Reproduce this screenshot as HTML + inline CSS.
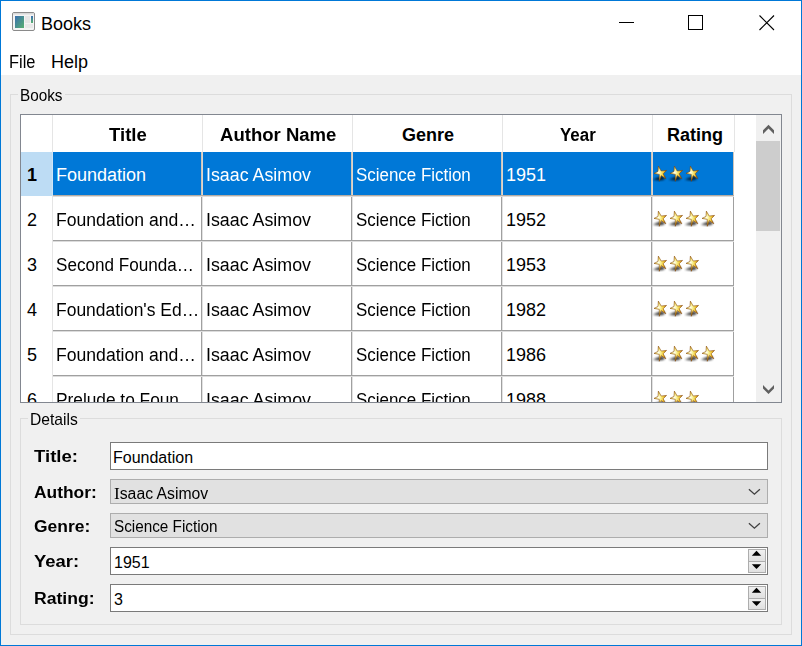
<!DOCTYPE html>
<html><head><meta charset="utf-8"><style>
html,body{margin:0;padding:0;}
body{width:802px;height:646px;overflow:hidden;position:relative;background:#f0f0f0;font-family:"Liberation Sans", sans-serif;}
.t{position:absolute;line-height:1;white-space:nowrap;font-family:"Liberation Sans", sans-serif;}
</style></head><body>
<svg width="0" height="0" style="position:absolute">
<defs>
<radialGradient id="sg" cx="0.36" cy="0.42" r="0.62"><stop offset="0" stop-color="#fffff0"/><stop offset="0.3" stop-color="#faf090"/><stop offset="0.65" stop-color="#f0c838"/><stop offset="1" stop-color="#c07a10"/></radialGradient>
<filter id="sb" x="-50%" y="-50%" width="200%" height="200%"><feGaussianBlur stdDeviation="0.8"/></filter>
<symbol id="star" viewBox="0 0 16 17" overflow="visible">
<path d="M0.8 14.8 L5.5 12.4 L9.5 11.2 L12.8 12.2 L12 14.8 L7.5 15.6 Z" fill="#000" opacity="0.75" filter="url(#sb)"/>
<path d="M6.35 1.1 L9.2 6.0 L14.55 5.4 L11.2 8.8 L13.8 13.8 L9.2 10.6 L7.3 16.3 L7.3 9.4 L2.0 8.4 L6.0 6.4 Z" fill="url(#sg)" stroke="#804000" stroke-width="0.55" stroke-linejoin="miter"/>
</symbol></defs></svg>
<div style="position:absolute;left:1px;top:75px;width:800px;height:570px;background:#f0f0f0;"></div>
<div style="position:absolute;left:1px;top:1px;width:800px;height:74px;background:#fff;"></div>
<svg style="position:absolute;left:12px;top:12px" width="24" height="20" viewBox="0 0 24 20">
<defs><linearGradient id="ig" x1="0" y1="0" x2="1" y2="1"><stop offset="0" stop-color="#3a6fb0"/><stop offset="1" stop-color="#58b070"/></linearGradient>
<linearGradient id="ig2" x1="0" y1="0" x2="0" y2="1"><stop offset="0" stop-color="#3a6fb0"/><stop offset="1" stop-color="#58b070"/></linearGradient></defs>
<rect x="0.5" y="0.5" width="22" height="18" rx="1.5" fill="#f4f4f4" stroke="#8a8a8a"/>
<rect x="1" y="1" width="21" height="1.5" fill="#d8d8d8"/>
<rect x="3" y="4" width="9" height="12" fill="url(#ig)"/>
<rect x="13" y="4" width="5" height="7" fill="#e6e6e6"/>
<rect x="13" y="12" width="8" height="4" fill="#e8e8e8"/>
<rect x="19" y="4" width="2" height="7" fill="url(#ig2)"/>
</svg>
<div class="t" style="left:41px;top:15.00px;font-size:18px;font-weight:400;color:#000;">Books</div>
<div style="position:absolute;left:619px;top:22px;width:15px;height:1px;background:#000;"></div>
<div style="position:absolute;left:688px;top:15px;width:15px;height:15px;box-sizing:border-box;border:1px solid #000;"></div>
<svg style="position:absolute;left:758px;top:14px" width="18" height="18" viewBox="0 0 18 18"><path d="M1.5 1.5 L16 16 M16 1.5 L1.5 16" stroke="#000" stroke-width="1.1" fill="none"/></svg>
<div class="t" style="left:9px;top:53.00px;font-size:18px;font-weight:400;color:#000;transform:scaleX(0.91);transform-origin:0 0;">File</div>
<div class="t" style="left:51px;top:53.00px;font-size:18px;font-weight:400;color:#000;">Help</div>
<div style="position:absolute;left:10px;top:94px;width:782px;height:541px;box-sizing:border-box;border:1px solid #dcdcdc;"></div>
<div style="position:absolute;left:18px;top:85px;width:47px;height:16px;background:#f0f0f0;"></div>
<div class="t" style="left:20px;top:87.00px;font-size:17px;font-weight:400;color:#000;transform:scaleX(0.9);transform-origin:0 0;">Books</div>
<div style="position:absolute;left:20px;top:114px;width:762px;height:289px;box-sizing:border-box;border:1px solid #828790;background:#fff;"></div>
<div style="position:absolute;left:21px;top:115px;width:735px;height:287px;overflow:hidden">
<div style="position:absolute;left:31px;top:0px;width:1px;height:37px;background:#e5e5e5;"></div>
<div style="position:absolute;left:181px;top:0px;width:1px;height:37px;background:#e5e5e5;"></div>
<div style="position:absolute;left:331px;top:0px;width:1px;height:37px;background:#e5e5e5;"></div>
<div style="position:absolute;left:481px;top:0px;width:1px;height:37px;background:#e5e5e5;"></div>
<div style="position:absolute;left:631px;top:0px;width:1px;height:37px;background:#e5e5e5;"></div>
<div style="position:absolute;left:713px;top:0px;width:1px;height:37px;background:#e5e5e5;"></div>
<div style="position:absolute;left:31px;top:37px;width:1px;height:251px;background:#e5e5e5;"></div>
<div style="position:absolute;left:0px;top:37px;width:31px;height:44px;background:#bddcf4;"></div>
<div style="position:absolute;left:31px;top:37px;width:1px;height:44px;background:#cfe4f6;"></div>
<div style="position:absolute;left:32px;top:37px;width:681px;height:44px;background:#0078d7;"></div>
<div style="position:absolute;left:180px;top:37px;width:1px;height:44px;background:#cfc5ba;"></div>
<div style="position:absolute;left:181px;top:37px;width:1px;height:44px;background:#ddd6cf;"></div>
<div style="position:absolute;left:330px;top:37px;width:1px;height:44px;background:#cfc5ba;"></div>
<div style="position:absolute;left:331px;top:37px;width:1px;height:44px;background:#ddd6cf;"></div>
<div style="position:absolute;left:480px;top:37px;width:1px;height:44px;background:#cfc5ba;"></div>
<div style="position:absolute;left:481px;top:37px;width:1px;height:44px;background:#ddd6cf;"></div>
<div style="position:absolute;left:630px;top:37px;width:1px;height:44px;background:#cfc5ba;"></div>
<div style="position:absolute;left:631px;top:37px;width:1px;height:44px;background:#ddd6cf;"></div>
<div style="position:absolute;left:712px;top:37px;width:1px;height:44px;background:#cfc5ba;"></div>
<div style="position:absolute;left:32px;top:80px;width:681px;height:1px;background:#b5aca3;"></div>
<div style="position:absolute;left:32px;top:81px;width:681px;height:1px;background:#dcdcdc;"></div>
<div class="t" style="left:6px;top:51.00px;font-size:18px;font-weight:700;color:#000;">1</div>
<div class="t" style="left:35px;top:51.00px;font-size:18px;font-weight:400;color:#fff;">Foundation</div>
<div class="t" style="left:185px;top:51.00px;font-size:18px;font-weight:400;color:#fff;transform:scaleX(0.99);transform-origin:0 0;">Isaac Asimov</div>
<div class="t" style="left:335px;top:51.00px;font-size:18px;font-weight:400;color:#fff;transform:scaleX(0.94);transform-origin:0 0;">Science Fiction</div>
<div class="t" style="left:485px;top:51.00px;font-size:18px;font-weight:400;color:#fff;">1951</div>
<svg style="position:absolute;left:631px;top:50px" width="16" height="17" viewBox="0 0 16 17"><use href="#star"/></svg>
<svg style="position:absolute;left:647px;top:50px" width="16" height="17" viewBox="0 0 16 17"><use href="#star"/></svg>
<svg style="position:absolute;left:663px;top:50px" width="16" height="17" viewBox="0 0 16 17"><use href="#star"/></svg>
<div style="position:absolute;left:180px;top:82px;width:1px;height:44px;background:#a0a0a0;"></div>
<div style="position:absolute;left:181px;top:82px;width:1px;height:44px;background:#e2e2e2;"></div>
<div style="position:absolute;left:330px;top:82px;width:1px;height:44px;background:#a0a0a0;"></div>
<div style="position:absolute;left:331px;top:82px;width:1px;height:44px;background:#e2e2e2;"></div>
<div style="position:absolute;left:480px;top:82px;width:1px;height:44px;background:#a0a0a0;"></div>
<div style="position:absolute;left:481px;top:82px;width:1px;height:44px;background:#e2e2e2;"></div>
<div style="position:absolute;left:630px;top:82px;width:1px;height:44px;background:#a0a0a0;"></div>
<div style="position:absolute;left:631px;top:82px;width:1px;height:44px;background:#e2e2e2;"></div>
<div style="position:absolute;left:712px;top:82px;width:1px;height:44px;background:#a0a0a0;"></div>
<div style="position:absolute;left:32px;top:125px;width:681px;height:1px;background:#a0a0a0;"></div>
<div style="position:absolute;left:32px;top:126px;width:681px;height:1px;background:#dcdcdc;"></div>
<div class="t" style="left:6px;top:96.00px;font-size:18px;font-weight:400;color:#000;">2</div>
<div class="t" style="left:35px;top:96.00px;font-size:18px;font-weight:400;color:#000;transform:scaleX(0.978);transform-origin:0 0;">Foundation and…</div>
<div class="t" style="left:185px;top:96.00px;font-size:18px;font-weight:400;color:#000;transform:scaleX(0.99);transform-origin:0 0;">Isaac Asimov</div>
<div class="t" style="left:335px;top:96.00px;font-size:18px;font-weight:400;color:#000;transform:scaleX(0.94);transform-origin:0 0;">Science Fiction</div>
<div class="t" style="left:485px;top:96.00px;font-size:18px;font-weight:400;color:#000;">1952</div>
<svg style="position:absolute;left:631px;top:95px" width="16" height="17" viewBox="0 0 16 17"><use href="#star"/></svg>
<svg style="position:absolute;left:647px;top:95px" width="16" height="17" viewBox="0 0 16 17"><use href="#star"/></svg>
<svg style="position:absolute;left:663px;top:95px" width="16" height="17" viewBox="0 0 16 17"><use href="#star"/></svg>
<svg style="position:absolute;left:679px;top:95px" width="16" height="17" viewBox="0 0 16 17"><use href="#star"/></svg>
<div style="position:absolute;left:180px;top:127px;width:1px;height:44px;background:#a0a0a0;"></div>
<div style="position:absolute;left:181px;top:127px;width:1px;height:44px;background:#e2e2e2;"></div>
<div style="position:absolute;left:330px;top:127px;width:1px;height:44px;background:#a0a0a0;"></div>
<div style="position:absolute;left:331px;top:127px;width:1px;height:44px;background:#e2e2e2;"></div>
<div style="position:absolute;left:480px;top:127px;width:1px;height:44px;background:#a0a0a0;"></div>
<div style="position:absolute;left:481px;top:127px;width:1px;height:44px;background:#e2e2e2;"></div>
<div style="position:absolute;left:630px;top:127px;width:1px;height:44px;background:#a0a0a0;"></div>
<div style="position:absolute;left:631px;top:127px;width:1px;height:44px;background:#e2e2e2;"></div>
<div style="position:absolute;left:712px;top:127px;width:1px;height:44px;background:#a0a0a0;"></div>
<div style="position:absolute;left:32px;top:170px;width:681px;height:1px;background:#a0a0a0;"></div>
<div style="position:absolute;left:32px;top:171px;width:681px;height:1px;background:#dcdcdc;"></div>
<div class="t" style="left:6px;top:141.00px;font-size:18px;font-weight:400;color:#000;">3</div>
<div class="t" style="left:35px;top:141.00px;font-size:18px;font-weight:400;color:#000;transform:scaleX(0.95);transform-origin:0 0;">Second Founda…</div>
<div class="t" style="left:185px;top:141.00px;font-size:18px;font-weight:400;color:#000;transform:scaleX(0.99);transform-origin:0 0;">Isaac Asimov</div>
<div class="t" style="left:335px;top:141.00px;font-size:18px;font-weight:400;color:#000;transform:scaleX(0.94);transform-origin:0 0;">Science Fiction</div>
<div class="t" style="left:485px;top:141.00px;font-size:18px;font-weight:400;color:#000;">1953</div>
<svg style="position:absolute;left:631px;top:140px" width="16" height="17" viewBox="0 0 16 17"><use href="#star"/></svg>
<svg style="position:absolute;left:647px;top:140px" width="16" height="17" viewBox="0 0 16 17"><use href="#star"/></svg>
<svg style="position:absolute;left:663px;top:140px" width="16" height="17" viewBox="0 0 16 17"><use href="#star"/></svg>
<div style="position:absolute;left:180px;top:172px;width:1px;height:44px;background:#a0a0a0;"></div>
<div style="position:absolute;left:181px;top:172px;width:1px;height:44px;background:#e2e2e2;"></div>
<div style="position:absolute;left:330px;top:172px;width:1px;height:44px;background:#a0a0a0;"></div>
<div style="position:absolute;left:331px;top:172px;width:1px;height:44px;background:#e2e2e2;"></div>
<div style="position:absolute;left:480px;top:172px;width:1px;height:44px;background:#a0a0a0;"></div>
<div style="position:absolute;left:481px;top:172px;width:1px;height:44px;background:#e2e2e2;"></div>
<div style="position:absolute;left:630px;top:172px;width:1px;height:44px;background:#a0a0a0;"></div>
<div style="position:absolute;left:631px;top:172px;width:1px;height:44px;background:#e2e2e2;"></div>
<div style="position:absolute;left:712px;top:172px;width:1px;height:44px;background:#a0a0a0;"></div>
<div style="position:absolute;left:32px;top:215px;width:681px;height:1px;background:#a0a0a0;"></div>
<div style="position:absolute;left:32px;top:216px;width:681px;height:1px;background:#dcdcdc;"></div>
<div class="t" style="left:6px;top:186.00px;font-size:18px;font-weight:400;color:#000;">4</div>
<div class="t" style="left:35px;top:186.00px;font-size:18px;font-weight:400;color:#000;transform:scaleX(0.97);transform-origin:0 0;">Foundation's Ed…</div>
<div class="t" style="left:185px;top:186.00px;font-size:18px;font-weight:400;color:#000;transform:scaleX(0.99);transform-origin:0 0;">Isaac Asimov</div>
<div class="t" style="left:335px;top:186.00px;font-size:18px;font-weight:400;color:#000;transform:scaleX(0.94);transform-origin:0 0;">Science Fiction</div>
<div class="t" style="left:485px;top:186.00px;font-size:18px;font-weight:400;color:#000;">1982</div>
<svg style="position:absolute;left:631px;top:185px" width="16" height="17" viewBox="0 0 16 17"><use href="#star"/></svg>
<svg style="position:absolute;left:647px;top:185px" width="16" height="17" viewBox="0 0 16 17"><use href="#star"/></svg>
<svg style="position:absolute;left:663px;top:185px" width="16" height="17" viewBox="0 0 16 17"><use href="#star"/></svg>
<div style="position:absolute;left:180px;top:217px;width:1px;height:44px;background:#a0a0a0;"></div>
<div style="position:absolute;left:181px;top:217px;width:1px;height:44px;background:#e2e2e2;"></div>
<div style="position:absolute;left:330px;top:217px;width:1px;height:44px;background:#a0a0a0;"></div>
<div style="position:absolute;left:331px;top:217px;width:1px;height:44px;background:#e2e2e2;"></div>
<div style="position:absolute;left:480px;top:217px;width:1px;height:44px;background:#a0a0a0;"></div>
<div style="position:absolute;left:481px;top:217px;width:1px;height:44px;background:#e2e2e2;"></div>
<div style="position:absolute;left:630px;top:217px;width:1px;height:44px;background:#a0a0a0;"></div>
<div style="position:absolute;left:631px;top:217px;width:1px;height:44px;background:#e2e2e2;"></div>
<div style="position:absolute;left:712px;top:217px;width:1px;height:44px;background:#a0a0a0;"></div>
<div style="position:absolute;left:32px;top:260px;width:681px;height:1px;background:#a0a0a0;"></div>
<div style="position:absolute;left:32px;top:261px;width:681px;height:1px;background:#dcdcdc;"></div>
<div class="t" style="left:6px;top:231.00px;font-size:18px;font-weight:400;color:#000;">5</div>
<div class="t" style="left:35px;top:231.00px;font-size:18px;font-weight:400;color:#000;transform:scaleX(0.978);transform-origin:0 0;">Foundation and…</div>
<div class="t" style="left:185px;top:231.00px;font-size:18px;font-weight:400;color:#000;transform:scaleX(0.99);transform-origin:0 0;">Isaac Asimov</div>
<div class="t" style="left:335px;top:231.00px;font-size:18px;font-weight:400;color:#000;transform:scaleX(0.94);transform-origin:0 0;">Science Fiction</div>
<div class="t" style="left:485px;top:231.00px;font-size:18px;font-weight:400;color:#000;">1986</div>
<svg style="position:absolute;left:631px;top:230px" width="16" height="17" viewBox="0 0 16 17"><use href="#star"/></svg>
<svg style="position:absolute;left:647px;top:230px" width="16" height="17" viewBox="0 0 16 17"><use href="#star"/></svg>
<svg style="position:absolute;left:663px;top:230px" width="16" height="17" viewBox="0 0 16 17"><use href="#star"/></svg>
<svg style="position:absolute;left:679px;top:230px" width="16" height="17" viewBox="0 0 16 17"><use href="#star"/></svg>
<div style="position:absolute;left:180px;top:262px;width:1px;height:44px;background:#a0a0a0;"></div>
<div style="position:absolute;left:181px;top:262px;width:1px;height:44px;background:#e2e2e2;"></div>
<div style="position:absolute;left:330px;top:262px;width:1px;height:44px;background:#a0a0a0;"></div>
<div style="position:absolute;left:331px;top:262px;width:1px;height:44px;background:#e2e2e2;"></div>
<div style="position:absolute;left:480px;top:262px;width:1px;height:44px;background:#a0a0a0;"></div>
<div style="position:absolute;left:481px;top:262px;width:1px;height:44px;background:#e2e2e2;"></div>
<div style="position:absolute;left:630px;top:262px;width:1px;height:44px;background:#a0a0a0;"></div>
<div style="position:absolute;left:631px;top:262px;width:1px;height:44px;background:#e2e2e2;"></div>
<div style="position:absolute;left:712px;top:262px;width:1px;height:44px;background:#a0a0a0;"></div>
<div style="position:absolute;left:32px;top:305px;width:681px;height:1px;background:#a0a0a0;"></div>
<div style="position:absolute;left:32px;top:306px;width:681px;height:1px;background:#dcdcdc;"></div>
<div class="t" style="left:6px;top:276.00px;font-size:18px;font-weight:400;color:#000;">6</div>
<div class="t" style="left:35px;top:276.00px;font-size:18px;font-weight:400;color:#000;transform:scaleX(0.96);transform-origin:0 0;">Prelude to Foun…</div>
<div class="t" style="left:185px;top:276.00px;font-size:18px;font-weight:400;color:#000;transform:scaleX(0.99);transform-origin:0 0;">Isaac Asimov</div>
<div class="t" style="left:335px;top:276.00px;font-size:18px;font-weight:400;color:#000;transform:scaleX(0.94);transform-origin:0 0;">Science Fiction</div>
<div class="t" style="left:485px;top:276.00px;font-size:18px;font-weight:400;color:#000;">1988</div>
<svg style="position:absolute;left:631px;top:275px" width="16" height="17" viewBox="0 0 16 17"><use href="#star"/></svg>
<svg style="position:absolute;left:647px;top:275px" width="16" height="17" viewBox="0 0 16 17"><use href="#star"/></svg>
<svg style="position:absolute;left:663px;top:275px" width="16" height="17" viewBox="0 0 16 17"><use href="#star"/></svg>
<div class="t" style="left:88px;top:11.00px;font-size:18px;font-weight:700;color:#000;transform:scaleX(1.03);transform-origin:0 0;">Title</div>
<div class="t" style="left:198.5px;top:11.00px;font-size:18px;font-weight:700;color:#000;transform:scaleX(1.03);transform-origin:0 0;">Author Name</div>
<div class="t" style="left:381px;top:11.00px;font-size:18px;font-weight:700;color:#000;">Genre</div>
<div class="t" style="left:539px;top:11.00px;font-size:18px;font-weight:700;color:#000;transform:scaleX(0.94);transform-origin:0 0;">Year</div>
<div class="t" style="left:646px;top:11.00px;font-size:18px;font-weight:700;color:#000;">Rating</div>
</div>
<div style="position:absolute;left:756px;top:115px;width:25px;height:287px;background:#f0f0f0;"></div>
<div style="position:absolute;left:756px;top:141px;width:24px;height:90px;background:#cdcdcd;"></div>
<svg style="position:absolute;left:756px;top:115px" width="25" height="26" viewBox="0 0 25 26"><path d="M7 15.3 L12.5 9.8 L18 15.3 L18 19 L12.5 13.5 L7 19 Z" fill="#606060"/></svg>
<svg style="position:absolute;left:756px;top:376px" width="25" height="26" viewBox="0 0 25 26"><path d="M7 8.9 L12.5 14.4 L18 8.9 L18 12.6 L12.5 18.1 L7 12.6 Z" fill="#606060"/></svg>
<div style="position:absolute;left:20px;top:418px;width:762px;height:207px;box-sizing:border-box;border:1px solid #dcdcdc;"></div>
<div style="position:absolute;left:28px;top:408px;width:52px;height:17px;background:#f0f0f0;"></div>
<div class="t" style="left:30px;top:410.50px;font-size:17px;font-weight:400;color:#000;transform:scaleX(0.92);transform-origin:0 0;">Details</div>
<div class="t" style="left:34px;top:448.50px;font-size:16px;font-weight:700;color:#000;transform:scaleX(1.16);transform-origin:0 0;">Title:</div>
<div class="t" style="left:34px;top:484.50px;font-size:16px;font-weight:700;color:#000;transform:scaleX(1.087);transform-origin:0 0;">Author:</div>
<div class="t" style="left:34px;top:518.50px;font-size:16px;font-weight:700;color:#000;transform:scaleX(1.09);transform-origin:0 0;">Genre:</div>
<div class="t" style="left:34px;top:553.50px;font-size:16px;font-weight:700;color:#000;transform:scaleX(1.15);transform-origin:0 0;">Year:</div>
<div class="t" style="left:34px;top:590.50px;font-size:16px;font-weight:700;color:#000;transform:scaleX(1.1);transform-origin:0 0;">Rating:</div>
<div style="position:absolute;left:110px;top:442px;width:658px;height:28px;box-sizing:border-box;border:1px solid #7a7a7a;background:#fff;"></div>
<div class="t" style="left:113px;top:449.50px;font-size:16px;font-weight:400;color:#000;">Foundation</div>
<div style="position:absolute;left:110px;top:479px;width:658px;height:25px;box-sizing:border-box;border:1px solid #adadad;background:#e1e1e1;"></div>
<div class="t" style="left:114px;top:484.50px;font-size:16px;font-weight:400;color:#000;transform:scaleX(0.985);transform-origin:0 0;"><span style="font-family:&quot;Liberation Serif&quot;,serif;font-size:17.5px">I</span>saac Asimov</div>
<svg style="position:absolute;left:745px;top:485px" width="18" height="12" viewBox="0 0 18 12"><path d="M3.9 4.2 L9.4 9.2 L14.9 4.2" stroke="#404040" stroke-width="1.3" fill="none"/></svg>
<div style="position:absolute;left:110px;top:513px;width:658px;height:25px;box-sizing:border-box;border:1px solid #adadad;background:#e1e1e1;"></div>
<div class="t" style="left:114px;top:518.50px;font-size:16px;font-weight:400;color:#000;transform:scaleX(0.955);transform-origin:0 0;">Science Fiction</div>
<svg style="position:absolute;left:745px;top:519px" width="18" height="12" viewBox="0 0 18 12"><path d="M3.9 4.2 L9.4 9.2 L14.9 4.2" stroke="#404040" stroke-width="1.3" fill="none"/></svg>
<div style="position:absolute;left:110px;top:547px;width:658px;height:28px;box-sizing:border-box;border:1px solid #7a7a7a;background:#fff;"></div>
<div class="t" style="left:114px;top:554.50px;font-size:16px;font-weight:400;color:#000;">1951</div>
<div style="position:absolute;left:748px;top:549px;width:18px;height:13px;box-sizing:border-box;border:1px solid #adadad;background:linear-gradient(#f0f0f0,#e0e0e0);"></div>
<div style="position:absolute;left:748px;top:561px;width:18px;height:12px;box-sizing:border-box;border:1px solid #adadad;background:linear-gradient(#f0f0f0,#e0e0e0);"></div>
<svg style="position:absolute;left:748px;top:549px" width="18" height="25" viewBox="0 0 18 25"><path d="M3.8 6.8 L13.2 6.8 L8.5 1.8 Z" fill="#000"/><path d="M3.8 15.2 L13.2 15.2 L8.5 20.1 Z" fill="#000"/></svg>
<div style="position:absolute;left:110px;top:584px;width:658px;height:28px;box-sizing:border-box;border:1px solid #7a7a7a;background:#fff;"></div>
<div class="t" style="left:114px;top:591.50px;font-size:16px;font-weight:400;color:#000;">3</div>
<div style="position:absolute;left:748px;top:586px;width:18px;height:13px;box-sizing:border-box;border:1px solid #adadad;background:linear-gradient(#f0f0f0,#e0e0e0);"></div>
<div style="position:absolute;left:748px;top:598px;width:18px;height:12px;box-sizing:border-box;border:1px solid #adadad;background:linear-gradient(#f0f0f0,#e0e0e0);"></div>
<svg style="position:absolute;left:748px;top:586px" width="18" height="25" viewBox="0 0 18 25"><path d="M3.8 6.8 L13.2 6.8 L8.5 1.8 Z" fill="#000"/><path d="M3.8 15.2 L13.2 15.2 L8.5 20.1 Z" fill="#000"/></svg>
<div style="position:absolute;left:0;top:0;width:802px;height:646px;box-sizing:border-box;border:1px solid #0078d7"></div>
</body></html>
